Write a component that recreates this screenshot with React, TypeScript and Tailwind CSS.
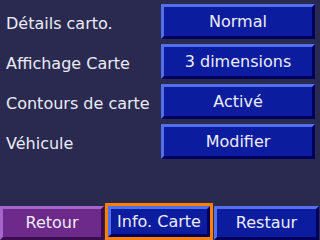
import React from "react";

const rows = [
  { label: "Détails carto.", value: "Normal" },
  { label: "Affichage Carte", value: "3 dimensions" },
  { label: "Contours de carte", value: "Activé" },
  { label: "Véhicule", value: "Modifier" },
];

const blueBtn =
  "flex items-center justify-center bg-[#0b1c9e] border-[3px] border-t-[#5270ea] border-l-[#5270ea] border-b-[#00005c] border-r-[#00005c] text-[#ececf6]";

export default function App() {
  return (
    <div
      className="w-[320px] h-[240px] bg-[#2a2a50] flex flex-col overflow-hidden text-[16px] leading-none"
      style={{ fontFamily: '"DejaVu Sans", sans-serif' }}
    >
      <div className="pt-[4px]">
        {rows.map((r) => (
          <div key={r.label} className="flex items-center h-[35px] mb-[5px]">
            <div className="w-[161px] pl-[6px] pt-[5px] text-[#ececf6]">{r.label}</div>
            <div className={`${blueBtn} w-[154px] h-[35px]`}>{r.value}</div>
          </div>
        ))}
      </div>

      <div className="mt-auto flex items-start h-[37px]">
        <div className="mt-[3px] w-[104px] h-[34px] flex items-center justify-center bg-[#6e2a8a] border-[3px] border-t-[#a466cc] border-l-[#a466cc] border-b-[#3a0c50] border-r-[#3a0c50] text-[#ececf6]">
          Retour
        </div>
        <div className="ml-[1px] w-[108px] h-[37px] border-[3px] border-[#ff8000]">
          <div className={`${blueBtn} w-full h-full`}>Info. Carte</div>
        </div>
        <div className={`${blueBtn} ml-[1px] mt-[3px] w-[105px] h-[34px]`}>Restaur</div>
      </div>
    </div>
  );
}
